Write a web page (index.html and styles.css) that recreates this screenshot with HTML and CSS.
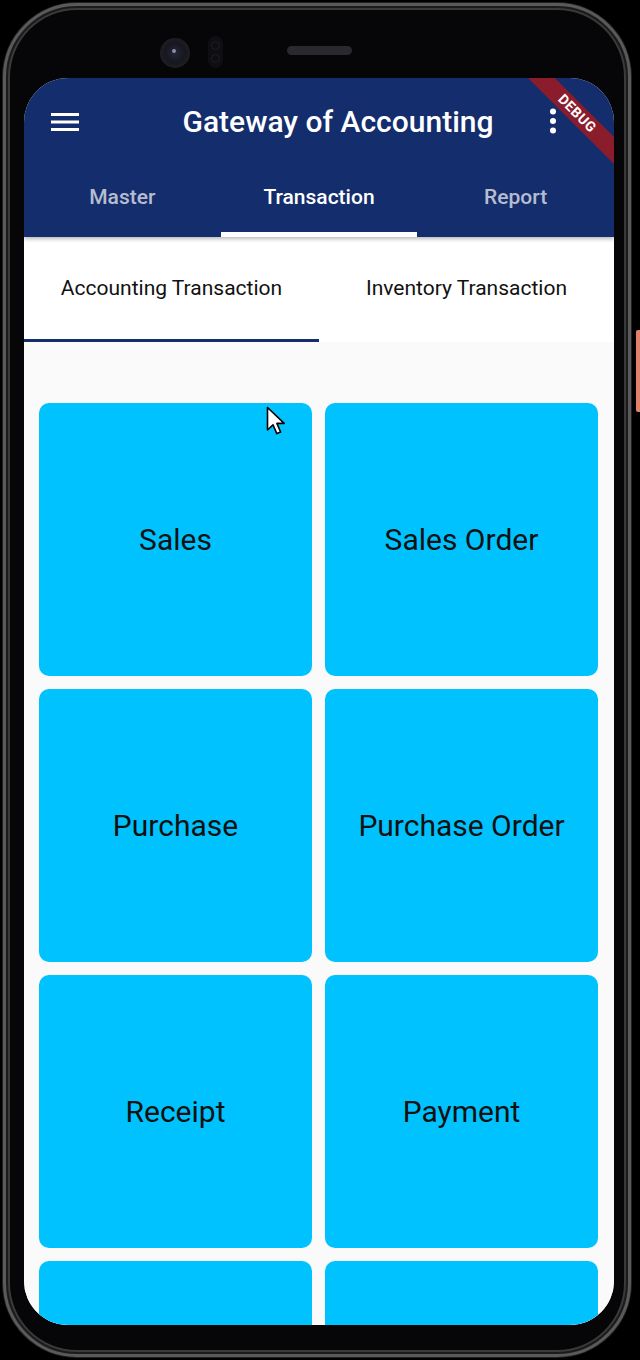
FILE: index.html
```html
<!DOCTYPE html>
<html lang="en">
<head>
<meta charset="utf-8">
<title>Gateway of Accounting</title>
<link rel="stylesheet" href="styles.css">
</head>
<body>
<div class="side-button"></div>
<div class="phone">
  <div class="bezel-top">
    <div class="camera"><span class="lens"></span></div>
    <div class="sensor"><span></span><span></span></div>
    <div class="speaker"></div>
  </div>
  <div class="screen">
    <header class="appbar">
      <div class="toolbar">
        <svg class="icon-menu" width="28" height="20" viewBox="0 0 28 20"><rect x="0" y="1" width="28" height="3" fill="#fff"/><rect x="0" y="8.5" width="28" height="3" fill="#fff"/><rect x="0" y="16" width="28" height="3" fill="#fff"/></svg>
        <h1 class="title">Gateway of Accounting</h1>
        <svg class="icon-more" width="8" height="26" viewBox="0 0 8 26"><circle cx="4" cy="3.5" r="3" fill="#fff"/><circle cx="4" cy="13" r="3" fill="#fff"/><circle cx="4" cy="22.5" r="3" fill="#fff"/></svg>
      </div>
      <nav class="tabs">
        <div class="tab">Master</div>
        <div class="tab active">Transaction</div>
        <div class="tab">Report</div>
      </nav>
    </header>
    <nav class="subtabs">
      <div class="subtab active">Accounting Transaction</div>
      <div class="subtab">Inventory Transaction</div>
    </nav>
    <main class="grid">
      <div class="tile">Sales</div>
      <div class="tile">Sales Order</div>
      <div class="tile">Purchase</div>
      <div class="tile">Purchase Order</div>
      <div class="tile">Receipt</div>
      <div class="tile">Payment</div>
      <div class="tile"></div>
      <div class="tile"></div>
    </main>
    <div class="debug-banner">DEBUG</div>
  </div>
</div>
<svg class="cursor" width="22" height="32" viewBox="0 0 22 32"><path d="M1.5 1.5 L1.5 24 L7 18.8 L10.8 27.6 L14.6 26 L10.9 17.4 L18.2 17.4 Z" fill="#fff" stroke="#000" stroke-width="1.6" stroke-linejoin="round"/></svg>
</body>
</html>
```
FILE: styles.css
```css
* { box-sizing: border-box; }
html, body {
  margin: 0;
  padding: 0;
  background: #000;
}
body {
  width: 640px;
  height: 1360px;
  overflow: hidden;
  position: relative;
  font-family: Roboto, "Liberation Sans", sans-serif;
}
.phone {
  margin: 3px 0 0 3px;
  width: 628px;
  height: 1354px;
  border: 3px solid #5a5a5a;
  border-radius: 74px;
  background: #060608;
  box-shadow: inset 0 0 0 2px #1b1b1b, inset 0 0 0 4px #3a3a3a, 0 0 0 1px #222;
  padding: 0 14px 0 18px;
  display: flex;
  flex-direction: column;
}
.bezel-top {
  height: 72px;
  flex: none;
  display: flex;
  align-items: center;
  padding: 20px 0 0 136px;
}
.camera {
  width: 30px;
  height: 30px;
  border-radius: 50%;
  background: radial-gradient(circle at 50% 50%, #262838 0, #16171f 45%, #1e1e24 70%, #0c0c10 100%);
  display: flex;
  align-items: center;
  justify-content: center;
  margin-top: 2px;
}
.camera .lens {
  width: 4px;
  height: 4px;
  border-radius: 50%;
  background: #8a8ea8;
  margin: -4px 0 0 -2px;
}
.sensor {
  margin-left: 18px;
  width: 15px;
  height: 32px;
  border-radius: 8px;
  background: #0f0f13;
  display: flex;
  flex-direction: column;
  align-items: center;
  justify-content: space-around;
  padding: 3px 0;
}
.sensor span {
  width: 9px;
  height: 9px;
  border-radius: 50%;
  border: 1px solid #1c1c22;
}
.speaker {
  margin-left: 64px;
  width: 65px;
  height: 9px;
  border-radius: 5px;
  background: #2a2a2e;
  margin-top: -4px;
}
.screen {
  width: 590px;
  height: 1247px;
  flex: none;
  border-radius: 44px;
  overflow: hidden;
  background: #fafafa;
  display: flex;
  flex-direction: column;
  position: relative;
}
.appbar {
  background: #142d6c;
  height: 159px;
  flex: none;
  display: flex;
  flex-direction: column;
  position: relative;
  z-index: 2;
  box-shadow: 0 2px 4px rgba(0, 0, 0, 0.28);
}
.toolbar {
  height: 86px;
  display: flex;
  align-items: center;
  padding: 0 57px 0 27px;
}
.icon-menu { flex: none; display: block; margin-top: 1px; }
.title {
  flex: 1;
  margin: 0;
  text-align: center;
  color: #fff;
  font-size: 30px;
  font-weight: 500;
  letter-spacing: 0;
  padding-left: 48px;
}
.icon-more { flex: none; display: block; }
.tabs {
  flex: 1;
  display: grid;
  grid-template-columns: 1fr 1fr 1fr;
}
.tab {
  display: flex;
  align-items: center;
  justify-content: center;
  color: rgba(255, 255, 255, 0.7);
  font-size: 21px;
  font-weight: 500;
  border-bottom: 5px solid transparent;
  padding-bottom: 2px;
}
.tab.active {
  color: #fff;
  border-bottom-color: #fff;
}
.subtabs {
  height: 105px;
  flex: none;
  display: grid;
  grid-template-columns: 1fr 1fr;
  background: #fff;
}
.subtab {
  display: flex;
  align-items: center;
  justify-content: center;
  color: #111;
  font-size: 21px;
  border-bottom: 3px solid transparent;
  padding-bottom: 0;
}
.subtab.active {
  border-bottom-color: #142d6c;
}
.grid {
  flex: 1;
  display: grid;
  grid-template-columns: 273px 273px;
  grid-auto-rows: 273px;
  gap: 13px;
  padding: 61px 16px 0 15px;
  overflow: hidden;
  background: #fafafa;
}
.tile {
  background: #00c2ff;
  border-radius: 10px;
  display: flex;
  align-items: center;
  justify-content: center;
  color: #111;
  font-size: 30px;
}
.debug-banner {
  position: absolute;
  left: 470px;
  top: 26px;
  width: 166px;
  height: 19px;
  line-height: 19px;
  background: #8a1c2c;
  color: #fff;
  font-size: 14px;
  font-weight: 700;
  text-align: center;
  letter-spacing: 0.5px;
  transform: rotate(45deg);
  z-index: 5;
}
.cursor {
  position: absolute;
  left: 266px;
  top: 406px;
}
.side-button {
  position: absolute;
  left: 636px;
  top: 330px;
  width: 6px;
  height: 82px;
  background: #e3826b;
  border-radius: 2px;
}
```
